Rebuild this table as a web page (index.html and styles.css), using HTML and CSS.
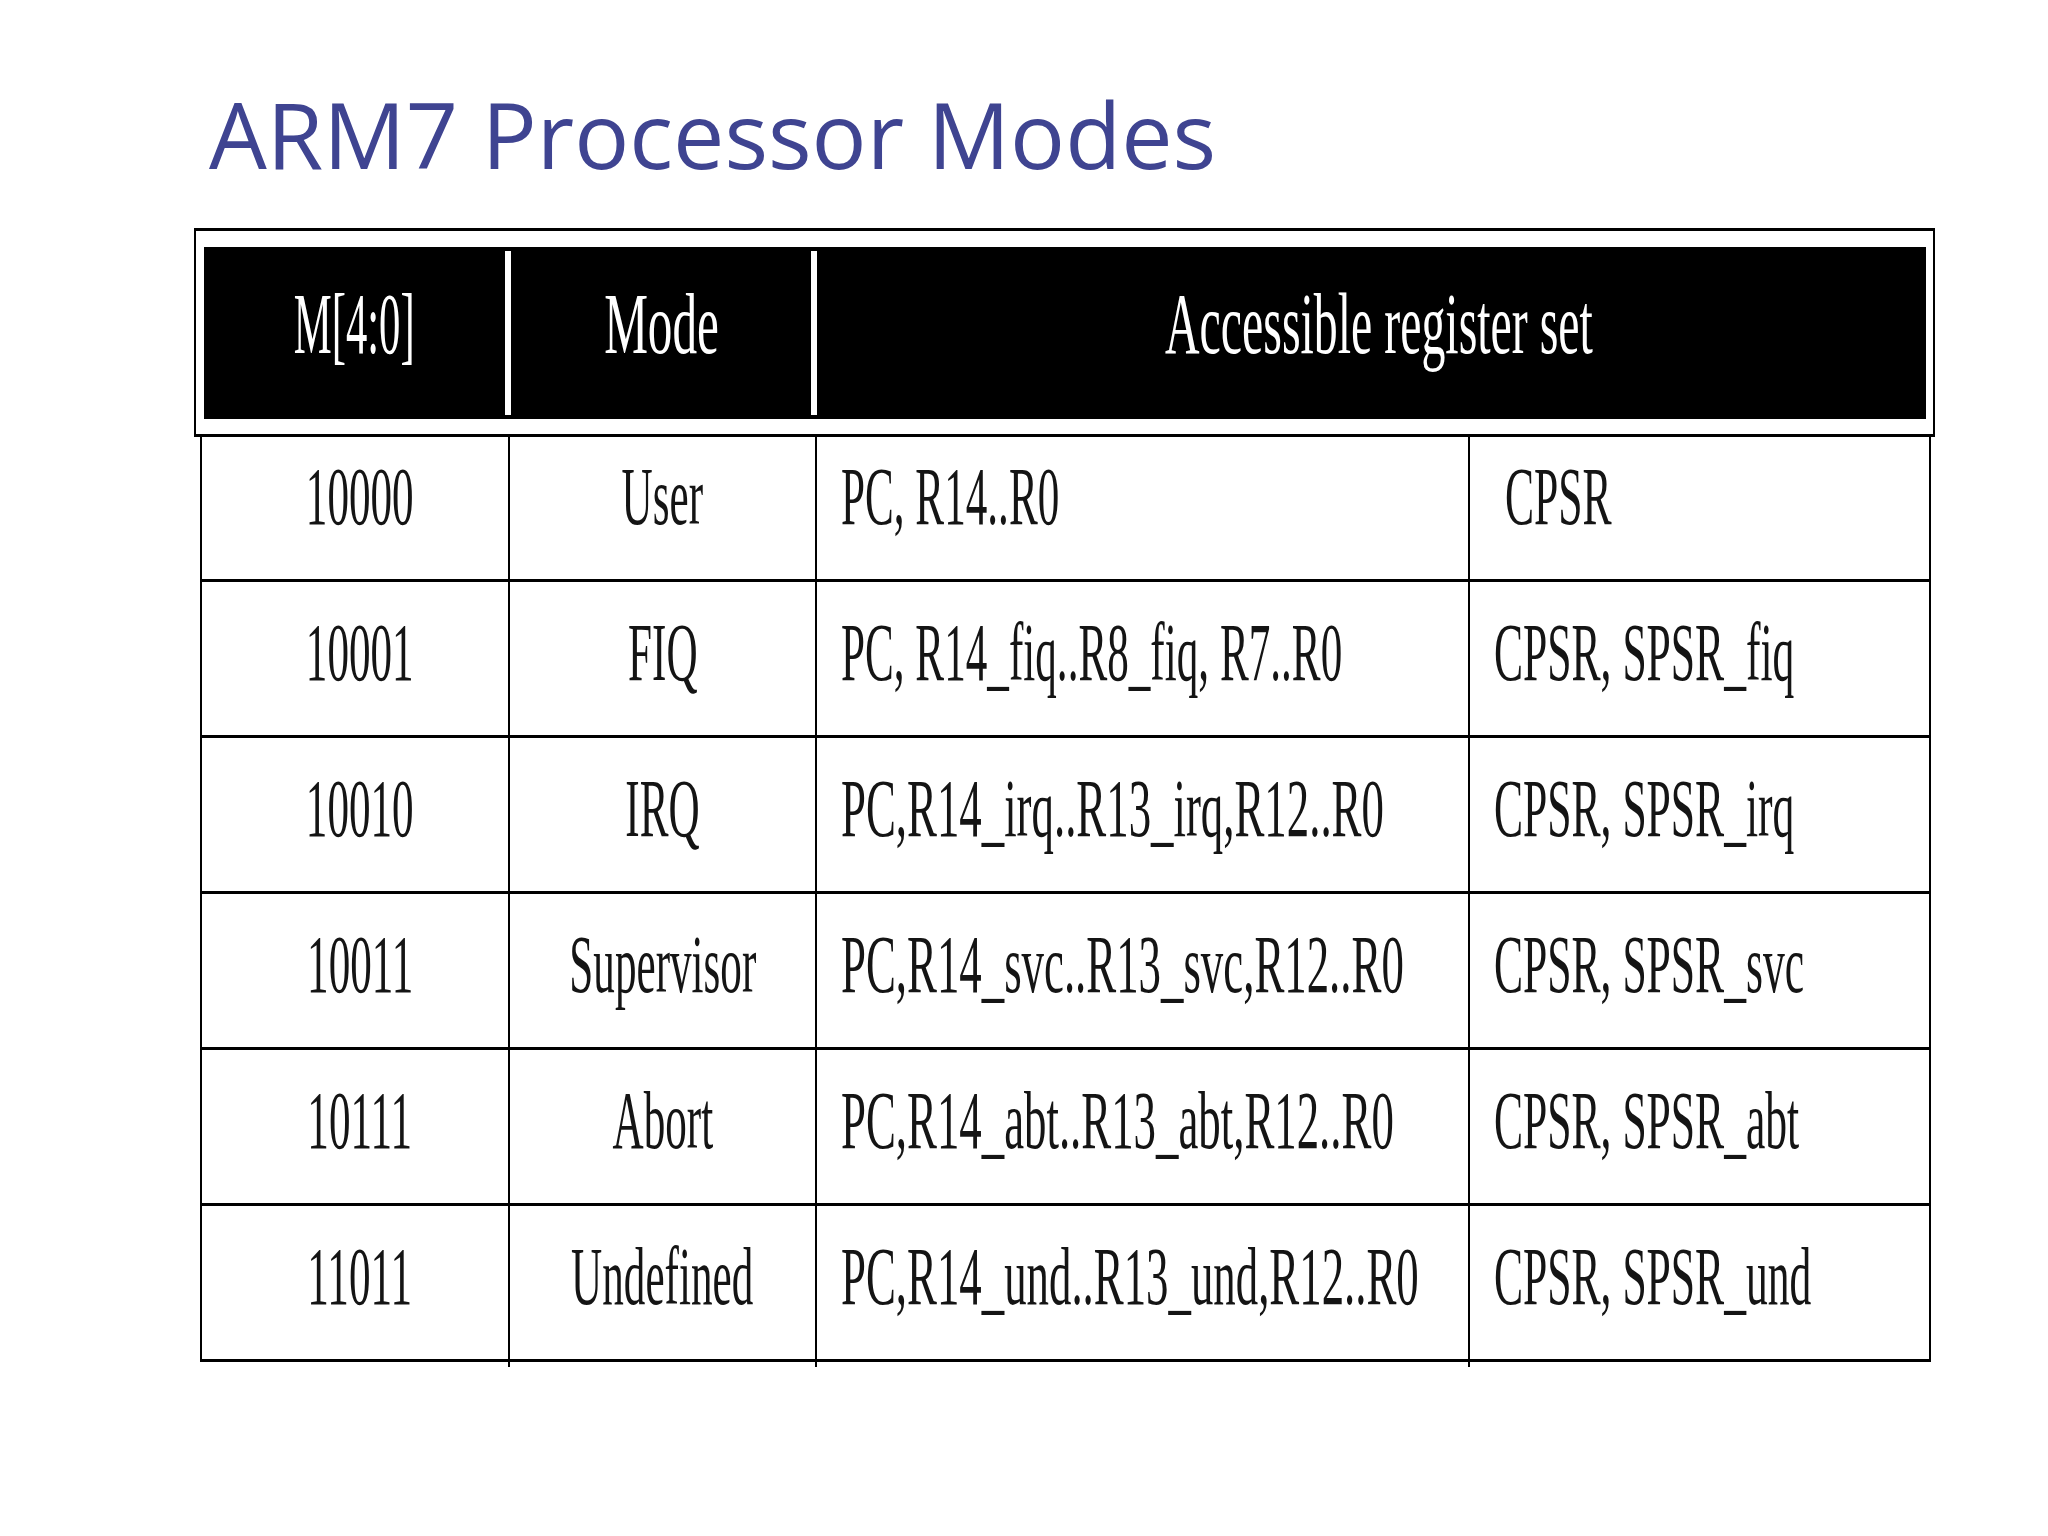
FILE: index.html
```html
<!DOCTYPE html>
<html lang="en">
<head>
<meta charset="utf-8">
<title>ARM7 Processor Modes</title>
<link rel="stylesheet" href="styles.css">
</head>
<body>
<div class="slide">
  <h1 class="title">ARM7 Processor Modes</h1>

  <div class="head-box">
    <div class="head">
      <div class="hcell"><span class="htxt narrow">M[4:0]</span></div>
      <div class="hsep"></div>
      <div class="hcell"><span class="htxt broad">Mode</span></div>
      <div class="hsep"></div>
      <div class="hcell wide"><span class="htxt">Accessible register set</span></div>
    </div>
  </div>

  <div class="body">
    <div class="row first">
      <div class="cell c1"><span class="txt">10000</span></div>
      <div class="cell c2"><span class="txt">User</span></div>
      <div class="cell c3"><span class="txt">PC, R14..R0</span></div>
      <div class="cell c4"><span class="txt">&nbsp;CPSR</span></div>
    </div>
    <div class="row">
      <div class="cell c1"><span class="txt">10001</span></div>
      <div class="cell c2"><span class="txt">FIQ</span></div>
      <div class="cell c3"><span class="txt">PC, R14_fiq..R8_fiq, R7..R0</span></div>
      <div class="cell c4"><span class="txt">CPSR, SPSR_fiq</span></div>
    </div>
    <div class="row">
      <div class="cell c1"><span class="txt">10010</span></div>
      <div class="cell c2"><span class="txt">IRQ</span></div>
      <div class="cell c3"><span class="txt tight">PC,R14_irq..R13_irq,R12..R0</span></div>
      <div class="cell c4"><span class="txt">CPSR, SPSR_irq</span></div>
    </div>
    <div class="row">
      <div class="cell c1"><span class="txt">10011</span></div>
      <div class="cell c2"><span class="txt">Supervisor</span></div>
      <div class="cell c3"><span class="txt tight">PC,R14_svc..R13_svc,R12..R0</span></div>
      <div class="cell c4"><span class="txt">CPSR, SPSR_svc</span></div>
    </div>
    <div class="row">
      <div class="cell c1"><span class="txt">10111</span></div>
      <div class="cell c2"><span class="txt">Abort</span></div>
      <div class="cell c3"><span class="txt tight">PC,R14_abt..R13_abt,R12..R0</span></div>
      <div class="cell c4"><span class="txt">CPSR, SPSR_abt</span></div>
    </div>
    <div class="row">
      <div class="cell c1"><span class="txt">11011</span></div>
      <div class="cell c2"><span class="txt">Undefined</span></div>
      <div class="cell c3"><span class="txt tight">PC,R14_und..R13_und,R12..R0</span></div>
      <div class="cell c4"><span class="txt">CPSR, SPSR_und</span></div>
    </div>
    <div class="tail">
      <div class="tcell"></div>
      <div class="tcell"></div>
      <div class="tcell"></div>
      <div class="tcell none"></div>
    </div>
  </div>
</div>
</body>
</html>
```

FILE: styles.css
```css
html, body {
  margin: 0;
  padding: 0;
  background: #ffffff;
}

body {
  width: 2048px;
  height: 1536px;
  overflow: hidden;
}

.slide {
  width: 2048px;
  height: 1536px;
  box-sizing: border-box;
  padding-top: 88px;
}

.title {
  margin: 0 0 0 209px;
  font-family: "Open Sans", "Noto Sans", sans-serif;
  font-weight: 400;
  font-size: 91.5px;
  line-height: 91px;
  height: 91px;
  color: #3f4491;
  letter-spacing: 0;
  white-space: nowrap;
}

/* ----- header box ----- */
.head-box {
  margin: 49px 0 0 194px;
  width: 1741px;
  box-sizing: border-box;
  border-style: solid;
  border-color: #000;
  border-width: 3px 2px 3px 2px;
  padding: 16px 7px 15px 8px;
  background: #fff;
}

.head {
  height: 172px;
  background: #000;
  display: grid;
  grid-template-columns: 301px 6px 300px 6px 1fr;
}

.hsep {
  background: #fff;
  margin: 4px 0;
}

.hcell {
  display: flex;
  justify-content: center;
  align-items: flex-start;
  padding-top: 33px;
}

.hcell.wide {
  padding-left: 14px;
}

.htxt {
  display: inline-block;
  white-space: nowrap;
  font-family: "Liberation Serif", "Times New Roman", serif;
  font-size: 87px;
  line-height: 87px;
  color: #fff;
  transform: scaleX(0.55);
  transform-origin: center center;
}

.htxt.narrow {
  transform: scaleX(0.49);
}

.htxt.broad {
  transform: scaleX(0.565);
}

/* ----- body table ----- */
.body {
  margin-left: 200px;
  width: 1731px;
}

.row {
  display: grid;
  grid-template-columns: 308px 307px 653px 461px;
  border-left: 2px solid #000;
  border-bottom: 3px solid #000;
  height: 156px;
  box-sizing: border-box;
}

.row.first {
  height: 145px;
}

.cell {
  border-right: 2px solid #000;
  display: flex;
  align-items: flex-start;
  padding-top: 29px;
  overflow: hidden;
}

.row.first .cell {
  padding-top: 18px;
}

.c1 {
  justify-content: center;
  padding-left: 10px;
}

.c2 {
  justify-content: center;
}

.c3,
.c4 {
  justify-content: flex-start;
  padding-left: 24px;
}

.txt {
  display: inline-block;
  flex: none;
  white-space: nowrap;
  font-family: "Liberation Serif", "Times New Roman", serif;
  font-size: 83px;
  line-height: 83px;
  color: #141414;
  transform: scaleX(0.52);
  transform-origin: center center;
}

.c3 .txt {
  transform-origin: left center;
}

.c3 .txt.tight {
  transform: scaleX(0.54);
}

.c4 .txt {
  transform-origin: left center;
  transform: scaleX(0.525);
}

.tail {
  display: grid;
  grid-template-columns: 310px 307px 653px 461px;
  height: 5px;
}

.tcell {
  border-right: 2px solid #000;
}

.tcell.none {
  border-right: none;
}
```
